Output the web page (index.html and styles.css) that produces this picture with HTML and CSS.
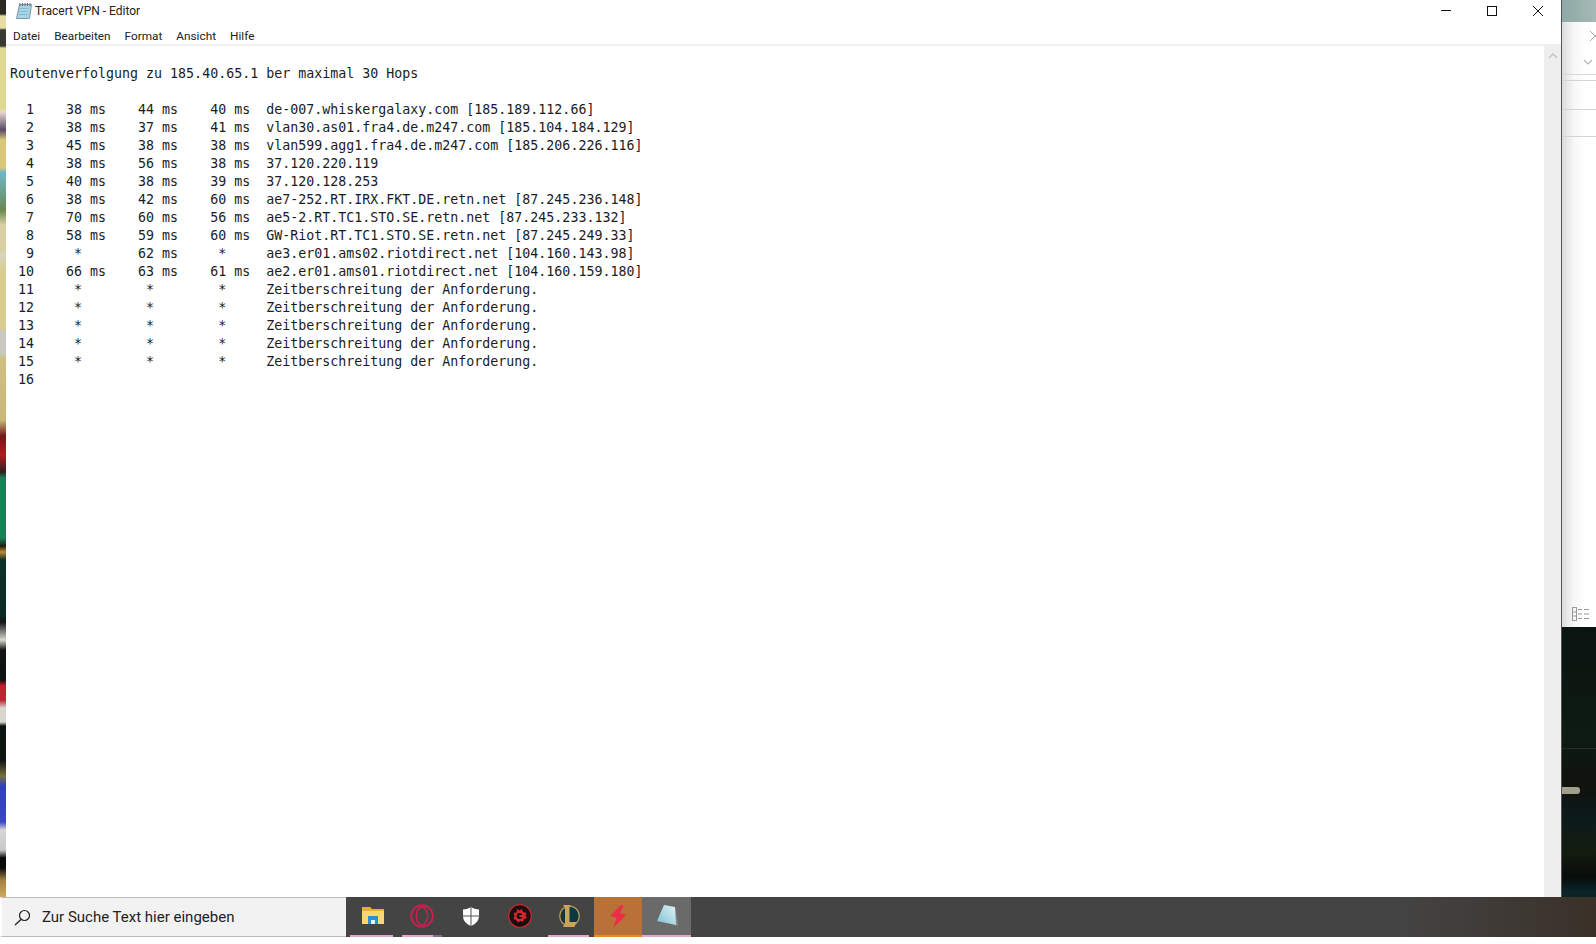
FILE: index.html
```html
<!DOCTYPE html>
<html lang="de">
<head>
<meta charset="utf-8">
<title>Tracert VPN - Editor</title>
<link rel="stylesheet" href="styles.css">
</head>
<body>
<div class="desk">
  <div class="strip"></div>
  <main class="window">
    <header class="titlebar">
      <svg class="app-icon" width="18" height="18" viewBox="0 0 18 18"><path d="M4.500 2.500h12l-2 14H1.500z" fill="#a9d4e6" stroke="#7d98a6"/><path d="M4.500 6.500h9M4 9.500h9M3.500 12.500h9" stroke="#7fb3cc" stroke-width=".8"/><path d="M5 1v3M7.500 1v3M10 1v3M12.500 1v3M15 1v3" stroke="#6a6a6a"/></svg>
      <span class="title">Tracert VPN - Editor</span>
      <div class="controls">
        <span class="ctl"><svg width="12" height="12" viewBox="0 0 12 12"><path d="M1 5.500h10" stroke="#111"/></svg></span>
        <span class="ctl"><svg width="12" height="12" viewBox="0 0 12 12"><rect x="1.500" y="1.500" width="9" height="9" fill="none" stroke="#111"/></svg></span>
        <span class="ctl"><svg width="12" height="12" viewBox="0 0 12 12"><path d="M1 1l10 10M11 1L1 11" stroke="#111"/></svg></span>
      </div>
    </header>
    <nav class="menu">
      <span class="menu-item">Datei</span>
      <span class="menu-item">Bearbeiten</span>
      <span class="menu-item">Format</span>
      <span class="menu-item">Ansicht</span>
      <span class="menu-item">Hilfe</span>
    </nav>
    <div class="body">
<pre class="text">

Routenverfolgung zu 185.40.65.1 ber maximal 30 Hops

  1    38 ms    44 ms    40 ms  de-007.whiskergalaxy.com [185.189.112.66]
  2    38 ms    37 ms    41 ms  vlan30.as01.fra4.de.m247.com [185.104.184.129]
  3    45 ms    38 ms    38 ms  vlan599.agg1.fra4.de.m247.com [185.206.226.116]
  4    38 ms    56 ms    38 ms  37.120.220.119
  5    40 ms    38 ms    39 ms  37.120.128.253
  6    38 ms    42 ms    60 ms  ae7-252.RT.IRX.FKT.DE.retn.net [87.245.236.148]
  7    70 ms    60 ms    56 ms  ae5-2.RT.TC1.STO.SE.retn.net [87.245.233.132]
  8    58 ms    59 ms    60 ms  GW-Riot.RT.TC1.STO.SE.retn.net [87.245.249.33]
  9     *       62 ms     *     ae3.er01.ams02.riotdirect.net [104.160.143.98]
 10    66 ms    63 ms    61 ms  ae2.er01.ams01.riotdirect.net [104.160.159.180]
 11     *        *        *     Zeitberschreitung der Anforderung.
 12     *        *        *     Zeitberschreitung der Anforderung.
 13     *        *        *     Zeitberschreitung der Anforderung.
 14     *        *        *     Zeitberschreitung der Anforderung.
 15     *        *        *     Zeitberschreitung der Anforderung.
 16</pre>
      <div class="scrollbar">
        <svg width="10" height="6" viewBox="0 0 10 6"><path d="M1 5l4-4 4 4" fill="none" stroke="#c4c4c4" stroke-width="1.500"/></svg>
      </div>
    </div>
  </main>
  <aside class="side">
    <div class="side-head"></div>
    <div class="side-panel">
      <div class="side-tools">
        <svg class="side-x" width="10" height="10" viewBox="0 0 10 10"><path d="M0 0l10 10M10 0L0 10" stroke="#a8a8a8"/></svg>
        <svg class="side-chev" width="10" height="6" viewBox="0 0 10 6"><path d="M1 1l4 4 4-4" fill="none" stroke="#b5b5b5" stroke-width="1.200"/></svg>
      </div>
      <div class="side-row short"></div>
      <div class="side-row mid"></div>
      <div class="side-row"></div>
      <div class="side-fill"></div>
      <div class="side-foot">
        <svg width="18" height="14" viewBox="0 0 18 14"><rect x=".5" y=".5" width="4" height="13" fill="none" stroke="#999"/><path d="M1 5h3M1 9h3M6 2.500h4M12 2.500h5M6 7h4M12 7h5M6 11.500h4M12 11.500h5" stroke="#999"/></svg>
      </div>
    </div>
    <div class="side-wall"><span class="wall-line"></span><span class="wall-mark"></span></div>
  </aside>
</div>
<footer class="taskbar">
  <div class="search">
    <svg width="17" height="17" viewBox="0 0 17 17"><circle cx="10.500" cy="6.500" r="5" fill="none" stroke="#222" stroke-width="1.200"/><path d="M7 10.500L1 16" stroke="#222" stroke-width="1.300"/></svg>
    <span class="search-text">Zur Suche Text hier eingeben</span>
  </div>
  <div class="tile t-files on">
    <svg width="22" height="18" viewBox="0 0 22 18"><path d="M0 0h8l2 2h12v15H0z" fill="#e8b030"/><path d="M0 4h22v13H0z" fill="#fbd66a"/><path d="M6 9h10v8H6z" fill="#2f8fd6"/><path d="M9 13h4v4H9z" fill="#e8eef2"/></svg>
  </div>
  <div class="tile t-opera on split">
    <svg width="24" height="24" viewBox="0 0 24 24"><circle cx="12" cy="12" r="10.800" fill="none" stroke="#c5214f" stroke-width="2"/><ellipse cx="12" cy="12" rx="5.600" ry="9" fill="none" stroke="#c5214f" stroke-width="1.800"/></svg>
  </div>
  <div class="tile t-shield">
    <svg width="18" height="19" viewBox="0 0 18 19"><path d="M9 0c2 1.500 5 2.300 8 2.500V9c0 5-4 8.500-8 10-4-1.500-8-5-8-10V2.500C4 2.300 7 1.500 9 0z" fill="#fff"/><path d="M8.500 0h1v19h-1zM1 8.500h16v1H1z" fill="#555"/></svg>
  </div>
  <div class="tile t-iobit">
    <svg width="24" height="24" viewBox="0 0 24 24"><circle cx="12" cy="12" r="11.300" fill="#1a0f10" stroke="#c9282d" stroke-width="1.300"/><path d="M9 5l2.500 1.500L14 5l1 3 3.500 1-1 2.500 1.500 2.500-3 1-1 3-2.500-1-2.500 1.500-2-2.500-2.500-1 1-3-1-3 3-.5z" fill="#d5282e"/><circle cx="11.500" cy="12" r="3" fill="#1a0f10"/><path d="M11.500 11h5v2h-5z" fill="#d5282e"/></svg>
  </div>
  <div class="tile t-lol on">
    <svg width="22" height="24" viewBox="0 0 22 24"><circle cx="11.500" cy="12" r="9.800" fill="#0c3844" stroke="#b59a5e" stroke-width="1.300"/><path d="M5 1h8l-1.500 2v15h7l-2 5H5l2-4V4z" fill="#c8a45c"/></svg>
  </div>
  <div class="tile t-bolt active">
    <svg width="18" height="22" viewBox="0 0 18 22"><path d="M12 0.500L2 10.500l6.500 2L5 21.500l11.500-11.500-6.500-1.500 4-8z" fill="#ee2c4a" stroke="#ee2c4a" stroke-linejoin="round"/></svg>
  </div>
  <div class="tile t-note on">
    <svg width="22" height="22" viewBox="0 0 22 22"><defs><linearGradient id="pad" x1="0" y1="1" x2="1" y2="0"><stop offset="0" stop-color="#7cc0d4"/><stop offset="1" stop-color="#e2f2f5"/></linearGradient></defs><path d="M19 2l3 18-3 1z" fill="#8a8a8a"/><path d="M8 0l11 2 1 18L1 16z" fill="url(#pad)"/></svg>
  </div>
</footer>
<div class="bottom"></div>
</body>
</html>
```

FILE: styles.css
```css
* { box-sizing: border-box; }
html, body { margin: 0; padding: 0; height: 944px; overflow: hidden; background: #fff; }
body { display: flex; flex-direction: column; font-family: Roboto, "Open Sans", sans-serif; color: #1a1a1a; }

.desk { display: flex; height: 897px; }

.strip {
  width: 6px;
  background: linear-gradient(180deg,
    #2a2a22 0, #2a2a22 14px, #e4dca0 16px, #e4dca0 28px, #3a3a34 30px, #3a3a34 46px,
    #e0d890 48px, #e0d890 108px, #e8d8d0 112px, #5a4a68 130px, #d8c878 140px, #d8c878 168px,
    #70b8c8 172px, #688850 210px, #d8d0a0 225px, #d8d0a0 250px, #d8d4c0 255px, #d8cc90 270px,
    #d8cc90 328px, #c8c8c0 332px, #c8c8c0 354px, #d0c080 358px, #c8b878 420px, #701818 436px,
    #a82020 455px, #302020 472px, #1a8058 478px, #1a8058 538px, #1c1c14 546px, #c08838 552px,
    #0c3028 560px, #0c2a24 616px, #141414 622px, #d8d8d0 640px, #141414 650px, #0c1410 680px,
    #c02030 686px, #c02030 700px, #d8d8d0 708px, #d8d8d0 722px, #0c1410 726px, #0c1410 760px,
    #7a7040 776px, #3040b8 786px, #3a48c0 822px, #d8d8d8 830px, #c8c8c8 850px, #080808 858px,
    #0c0c0c 868px, #a08040 880px, #d0a860 897px);
}

.window { flex: 1; min-width: 0; display: flex; flex-direction: column; background: #fff; }

.titlebar { display: flex; align-items: center; height: 22px; padding-left: 9px; }
.app-icon { flex: none; }
.title { margin-left: 2px; font-size: 12px; color: #222; }
.controls { display: flex; margin-left: auto; }
.ctl { display: flex; align-items: center; justify-content: center; width: 46px; height: 21px; }

.menu { display: flex; height: 24px; padding: 6px 0 0 0; border-bottom: 2px solid #f0f0f0; }
.menu-item { padding: 0 7px; font-size: 11.8px; line-height: 16px; color: #222; }

.body { flex: 1; min-height: 0; display: flex; }
.text {
  flex: 1; margin: 0; padding: 1px 0 0 4px;
  font-family: "DejaVu Sans Mono", "Liberation Mono", monospace;
  font-size: 13.3px; line-height: 18px; color: #1c1c1c;
}
.scrollbar { width: 17px; padding-top: 7px; background: #eeeeee; display: flex; justify-content: center; align-items: flex-start; }

.side { width: 35px; display: flex; flex-direction: column; border-left: 1px solid #555; }
.side-head { height: 22px; background: linear-gradient(90deg, #8fa8a6, #a4bab4); }
.side-panel { height: 605px; display: flex; flex-direction: column; background: linear-gradient(90deg, #dcdcdc 0, #f7f7f7 12px, #fff 24px); }
.side-tools { height: 53px; padding: 9px 0 0 21px; border-bottom: 1px solid #d8d8d8; }
.side-x { display: block; margin-left: 7px; }
.side-chev { display: block; margin: 18px 0 0 0; }
.side-row { border-bottom: 1px solid #d4d4d4; }
.side-row.short { height: 6px; }
.side-row.mid { height: 29px; }
.side-row:not(.short):not(.mid) { height: 27px; }
.side-fill { flex: 1; }
.side-foot { height: 23px; padding: 2px 0 0 10px; }

.side-wall { flex: 1; position: relative; overflow: hidden; background: linear-gradient(180deg, #0a1410 0, #0e1a14 110px, #10120e 160px, #0c1a1c 190px, #141c10 225px, #080c0a 250px, #0c2428 265px); }
.wall-line { position: absolute; left: 0; right: 0; top: 121px; height: 1px; background: #2c2c24; }
.wall-mark { position: absolute; left: 0; top: 160px; width: 18px; height: 7px; background: #a0a08c; border-radius: 0 3px 3px 0; }

.taskbar { display: flex; height: 40px; background: linear-gradient(90deg, #444 0, #444 1400px, #3a3028 1596px); }
.search { width: 346px; padding-left: 12px; display: flex; align-items: center; gap: 11px; background: #f2f2f2; border-top: 1px solid #bcbcbc; border-bottom: 1px solid #bcbcbc; border-left: 2px solid #fff; }
.search-text { font-size: 15px; color: #222; }

.tile { position: relative; display: flex; align-items: center; justify-content: center; padding-bottom: 2px; }
.tile.on::after { content: ""; position: absolute; left: 4px; right: 5px; bottom: 0; height: 2px; background: #e6a6c8; }
.tile.split::before { content: ""; position: absolute; left: 35px; right: 4px; bottom: 0; height: 2px; background: #8a6a80; }
.t-files { width: 52px; padding-left: 1px; }
.t-opera { width: 48px; }
.t-opera.on::after { right: 13px; }
.t-shield { width: 50px; }
.t-iobit { width: 48px; }
.t-lol { width: 50px; }
.t-bolt { width: 48px; background: #b87238; }
.t-bolt.active::after { content: ""; position: absolute; left: 0; right: 0; bottom: 0; height: 2px; background: #e88a28; }
.t-note { width: 49px; background: #6a6a6a; }
.t-note.on::after { left: 0; right: 0; }

.bottom { height: 7px; background: #fff; }
```
